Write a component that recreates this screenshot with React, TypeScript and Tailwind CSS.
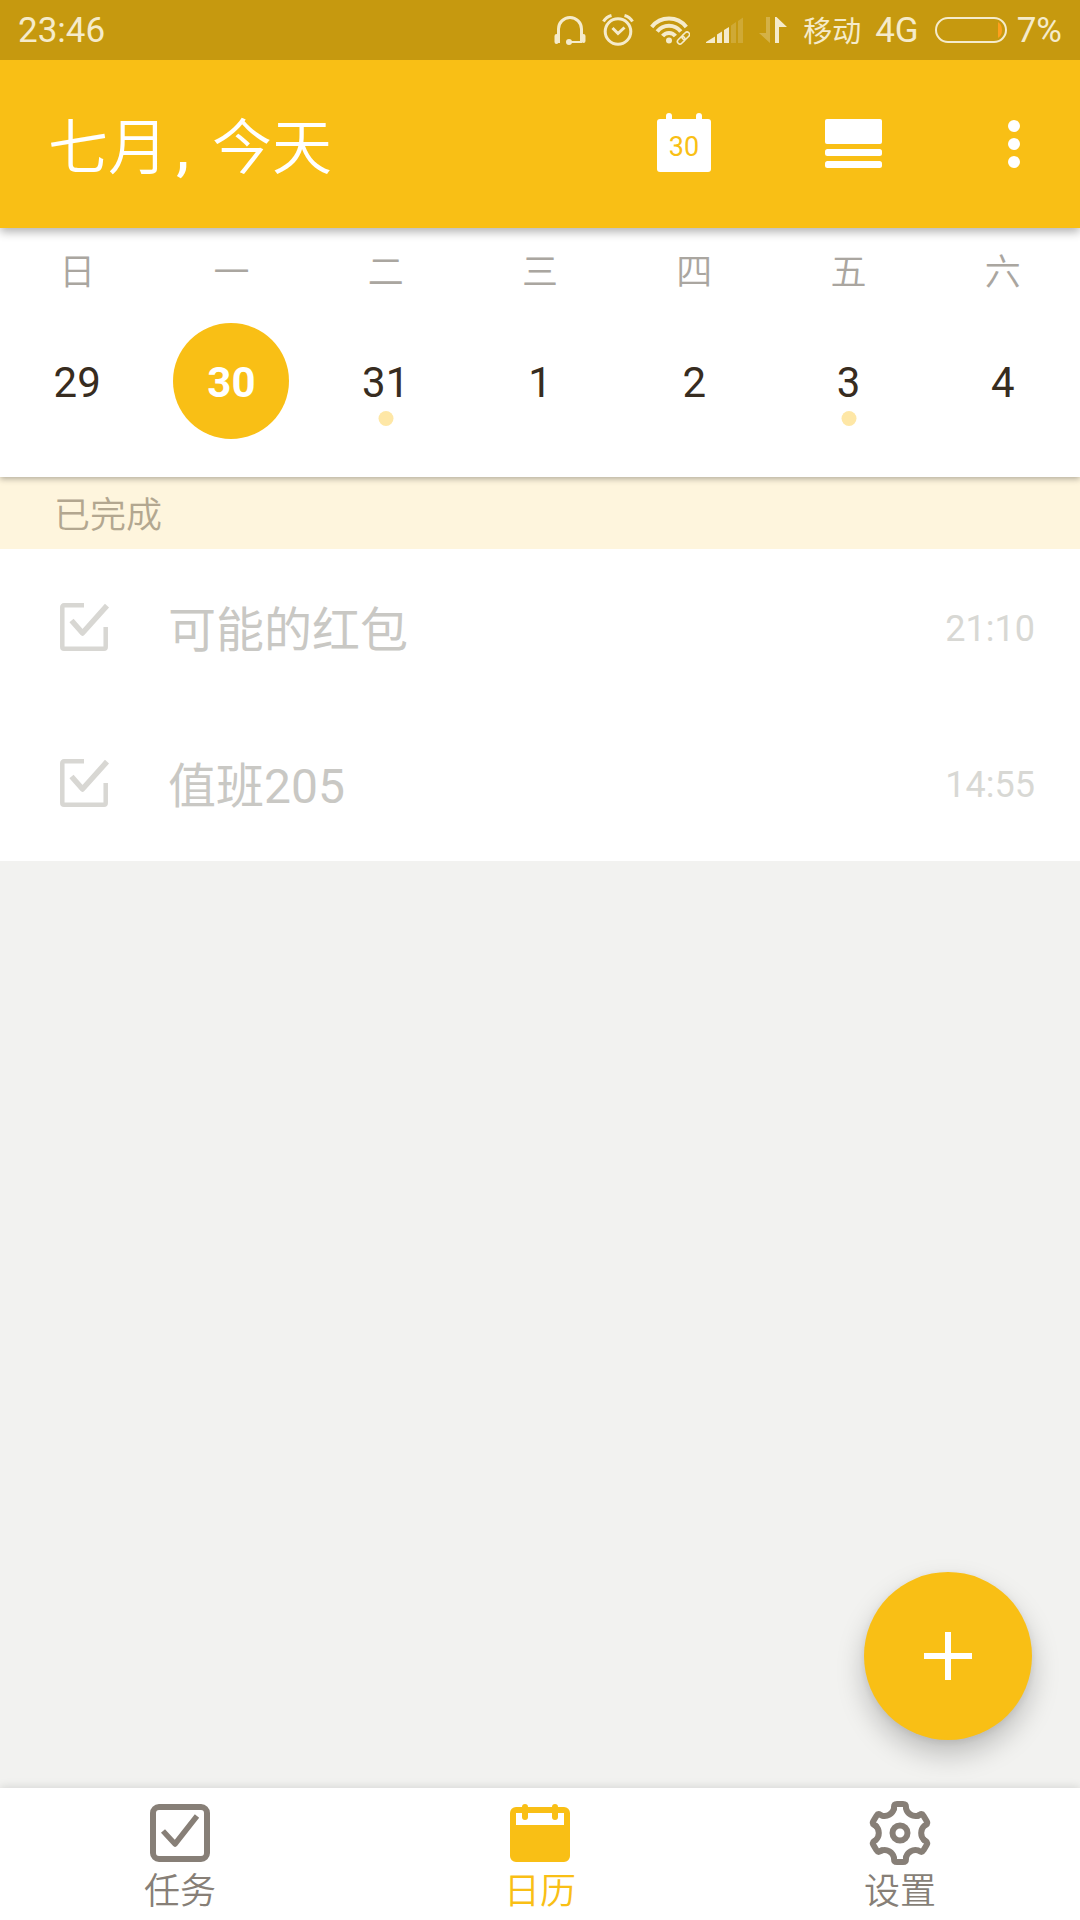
import { useState } from "react";

const week = [
  { label: "日", date: 29 },
  { label: "一", date: 30, today: true },
  { label: "二", date: 31, hasTask: true },
  { label: "三", date: 1 },
  { label: "四", date: 2 },
  { label: "五", date: 3, hasTask: true },
  { label: "六", date: 4 },
];

const tasks = [
  { id: "task-1", title: "可能的红包", time: "21:10" },
  { id: "task-2", title: "值班205", time: "14:55" },
];

const HeadsetIcon = () => (
  <svg className="h-8 w-8" viewBox="0 0 32 32" fill="none" stroke="currentColor" strokeWidth="3">
    <path d="M4.500 29V15a11.500 11.500 0 0 1 23 0V28" />
    <path d="M28 28H15" strokeWidth="2" />
    <path d="M2.500 22v6M29.500 22v5" strokeWidth="4" strokeLinecap="round" />
    <circle cx="15" cy="28" r="3" fill="currentColor" stroke="none" />
  </svg>
);

const AlarmIcon = () => (
  <svg className="h-8 w-8" viewBox="0 0 32 32" fill="none" stroke="currentColor" strokeWidth="3">
    <circle cx="16" cy="17.500" r="12.800" />
    <path d="m10.500 14 5.500 5.500 6.500-6" />
    <path d="M1.500 7.500Q4 3 9.500 1.500M30.500 7.500Q28 3 22.500 1.500" />
  </svg>
);

const WifiIcon = () => (
  <svg className="h-8 w-10" viewBox="0 0 40 32" fill="none" stroke="currentColor" strokeWidth="4">
    <path d="M1.700 13a22 22 0 0 1 34.600 0" />
    <path d="M7.200 17.500a15 15 0 0 1 23.600 0" />
    <path d="M12.600 22a8.200 8.200 0 0 1 12.800 0" />
    <circle cx="19" cy="26.500" r="3" fill="currentColor" stroke="none" />
    <g transform="rotate(-45 33.500 24)" strokeWidth="1.600">
      <rect x="26" y="21.500" width="8.500" height="5" rx="2.500" />
      <rect x="32.500" y="21.500" width="8.500" height="5" rx="2.500" />
    </g>
  </svg>
);

const SignalIcon = () => (
  <svg className="h-8 w-[37px]" viewBox="0 0 37 32" fill="currentColor">
    <path d="M0 28 9 22.500V29H0zM11 20.500l5-3V29h-5zM18 16l5-3v16h-5z" />
    <path d="M25 11.500 30 8v21h-5zM32 7l5-3.500V29h-5z" opacity=".2" />
  </svg>
);

const DataIcon = () => (
  <svg className="h-8 w-7" viewBox="0 0 28 32" fill="currentColor">
    <path d="M7 3h4v26L0 19h7z" opacity=".3" />
    <path d="M16 3h1.500L28 13h-8v16h-4z" />
  </svg>
);

const BatteryIcon = () => (
  <svg className="h-8 w-[72px]" viewBox="0 0 72 32">
    <path d="M63 8Q67 10.500 67 16t-4 8z" fill="#ff9f1c" />
    <rect x="1" y="4" width="70" height="24" rx="12" fill="none" stroke="currentColor" strokeWidth="2" />
  </svg>
);

const TodayIcon = () => (
  <svg className="h-[60px] w-[54px]" viewBox="0 0 54 60">
    <rect y="7" width="54" height="53" rx="3" fill="#fff" />
    <rect x="9" y="1" width="6" height="12" rx="3" fill="#fff" />
    <rect x="39" y="1" width="6" height="12" rx="3" fill="#fff" />
    <text x="27" y="44" textAnchor="middle" fontSize="27" fill="#f9bf15">
      30
    </text>
  </svg>
);

const AgendaIcon = () => (
  <svg className="h-[50px] w-[57px]" viewBox="0 0 57 50" fill="#fff">
    <rect width="57" height="25" rx="2" />
    <rect y="30" width="57" height="7" rx="2.500" />
    <rect y="42" width="57" height="7" rx="2.500" />
  </svg>
);

const MoreIcon = () => (
  <svg className="h-12 w-3" viewBox="0 0 12 48" fill="#fff">
    <circle cx="6" cy="6" r="6" />
    <circle cx="6" cy="24" r="6" />
    <circle cx="6" cy="42" r="6" />
  </svg>
);

const CheckIcon = ({ checked }: { checked: boolean }) => (
  <svg className="h-12 w-[50px]" viewBox="0 0 50 48" fill="none" stroke="#d8d7d3">
    <path
      d={checked ? "M24 2.300H4a1.700 1.700 0 0 0-1.700 1.700v40A1.700 1.700 0 0 0 4 45.700h40a1.700 1.700 0 0 0 1.700-1.700V24" : "M2.300 2.300h43.400v43.400H2.300z"}
      strokeWidth="4.500"
    />
    {checked && <path d="m11.500 17.500 11 12.500L47 2.700" strokeWidth="5.500" strokeLinejoin="round" />}
  </svg>
);

const TasksIcon = () => (
  <svg className="h-16 w-[60px]" viewBox="0 0 60 64" fill="none" stroke="currentColor" strokeWidth="6">
    <rect x="3" y="6" width="54" height="52" rx="6" />
    <path d="m13 30 12 13 22-28" strokeWidth="5.500" strokeLinejoin="round" />
  </svg>
);

const CalendarIcon = () => (
  <svg className="h-16 w-[60px]" viewBox="0 0 60 64" fill="currentColor">
    <path fillRule="evenodd" d="M6 6h48a6 6 0 0 1 6 6v43a6 6 0 0 1-6 6H6a6 6 0 0 1-6-6V12a6 6 0 0 1 6-6zM6 12v12h48V12z" />
    <rect x="12" y="3" width="6" height="16" rx="3" />
    <rect x="42" y="3" width="6" height="16" rx="3" />
  </svg>
);

// One tooth plus the hollow after it, repeated six times around the hub
const GearIcon = () => (
  <svg className="h-16 w-16" viewBox="-32 -32 64 64" fill="none" stroke="currentColor" strokeWidth="6">
    {[0, 60, 120, 180, 240, 300].map((angle) => (
      <path
        key={angle}
        d="M-6-24.500V-26Q-6-29-3-29H3Q6-29 6-26V-24.500A9.800 9.800 0 0 0 18.200-17.400"
        transform={`rotate(${angle})`}
        strokeLinecap="round"
      />
    ))}
    <circle r="7.500" />
  </svg>
);

const navItems = [
  { label: "任务", Icon: TasksIcon, active: false },
  { label: "日历", Icon: CalendarIcon, active: true },
  { label: "设置", Icon: GearIcon, active: false },
];

const StatusBar = () => (
  <div className="relative z-30 flex h-[60px] items-center justify-between bg-[#c6990f] px-[18px] text-[35px] leading-[60px] text-[#f5ebcb]">
    <time className="pt-0.5">23:46</time>
    <div className="flex items-center gap-4">
      <HeadsetIcon />
      <AlarmIcon />
      <WifiIcon />
      <SignalIcon />
      <DataIcon />
      <div className="flex items-center gap-3.5">
        <span className="pt-1 text-[29px]">移动</span>
        <span className="pt-0.5">4G</span>
      </div>
      <div className="flex items-center gap-2.5">
        <BatteryIcon />
        <span className="pt-0.5">7%</span>
      </div>
    </div>
  </div>
);

const Header = () => (
  <header className="relative z-20 flex h-[168px] items-center justify-between bg-[#f9bf15] pl-12 shadow-[0_4px_9px_rgba(0,0,0,0.3)]">
    <h1 className="pt-2.5 text-[60px] leading-[72px] font-[350] text-white">
      七月<span className="px-2 font-medium">,</span> 今天
    </h1>
    <div className="flex h-full">
      <button type="button" aria-label="今天" className="flex w-[168px] items-center justify-center pb-1">
        <TodayIcon />
      </button>
      <button type="button" aria-label="视图" className="mr-3 flex w-[168px] items-center justify-center pl-0.5">
        <AgendaIcon />
      </button>
      <button type="button" aria-label="更多" className="flex w-[132px] items-center justify-center">
        <MoreIcon />
      </button>
    </div>
  </header>
);

const WeekStrip = () => (
  <section className="relative z-10 grid grid-cols-7 bg-white pt-[18px] pb-[38px] shadow-[0_2px_6px_rgba(0,0,0,0.3)]">
    {week.map((day) => (
      <div key={day.label} className="flex flex-col items-center gap-[23px]">
        <span className="text-4xl leading-[54px] font-[350] text-[#aaa6a0]">{day.label}</span>
        <button
          type="button"
          className={
            day.today
              ? "relative size-[116px] rounded-full bg-[#f9bf15] pt-0.5 text-[42px] font-bold text-white"
              : "relative size-[116px] rounded-full pt-0.5 text-[42px] text-[#372c20]"
          }
        >
          {day.date}
          {day.hasTask && (
            <span className="absolute bottom-[13px] left-1/2 size-[15px] -translate-x-1/2 rounded-full bg-[#fee7a6]" />
          )}
        </button>
      </div>
    ))}
  </section>
);

const App = () => {
  const [done, setDone] = useState<Record<string, boolean>>({ "task-1": true, "task-2": true });

  return (
    <div className="flex min-h-screen flex-col bg-[#f2f2f0] font-['Roboto','Noto_Sans_CJK_SC',sans-serif]">
      <StatusBar />
      <Header />
      <WeekStrip />

      <main className="flex-1">
        <h2 className="bg-[#fef5dd] pt-1.5 pl-[54px] text-4xl leading-[66px] font-[350] text-[#b3a790]">已完成</h2>
        <ul className="bg-white">
          {tasks.map((task) => (
            <li key={task.id} className="flex h-[156px] items-center pr-[45px] pl-[60px]">
              <label htmlFor={task.id} className="flex flex-1 items-center gap-[58px] text-5xl text-[#c9c8c4]">
                <input
                  id={task.id}
                  type="checkbox"
                  className="sr-only"
                  checked={done[task.id]}
                  onChange={(e) => setDone({ ...done, [task.id]: e.target.checked })}
                />
                <CheckIcon checked={done[task.id]} />
                <span className="pt-2">{task.title}</span>
              </label>
              <time className="pt-1 text-4xl text-[#d8d8d4]">{task.time}</time>
            </li>
          ))}
        </ul>
      </main>

      <button
        type="button"
        aria-label="添加任务"
        className="fixed right-12 bottom-[180px] flex size-[168px] items-center justify-center rounded-full bg-[#f9bf15] shadow-[0_14px_28px_rgba(0,0,0,0.22),0_2px_8px_rgba(0,0,0,0.08)]"
      >
        <svg className="size-12" viewBox="0 0 48 48" stroke="#fff" strokeWidth="6">
          <path d="M24 0v48M0 24h48" />
        </svg>
      </button>

      <nav className="grid h-[132px] grid-cols-3 bg-white shadow-[0_-1px_9px_rgba(0,0,0,0.12)]">
        {navItems.map(({ label, Icon, active }) => (
          <a
            key={label}
            href="#"
            className={
              active
                ? "flex flex-col items-center gap-[3px] pt-[13px] text-4xl leading-[48px] font-[350] text-[#f9bf15]"
                : "flex flex-col items-center gap-[3px] pt-[13px] text-4xl leading-[48px] font-[350] text-[#877f77]"
            }
          >
            <Icon />
            {label}
          </a>
        ))}
      </nav>
    </div>
  );
};

export default App;
